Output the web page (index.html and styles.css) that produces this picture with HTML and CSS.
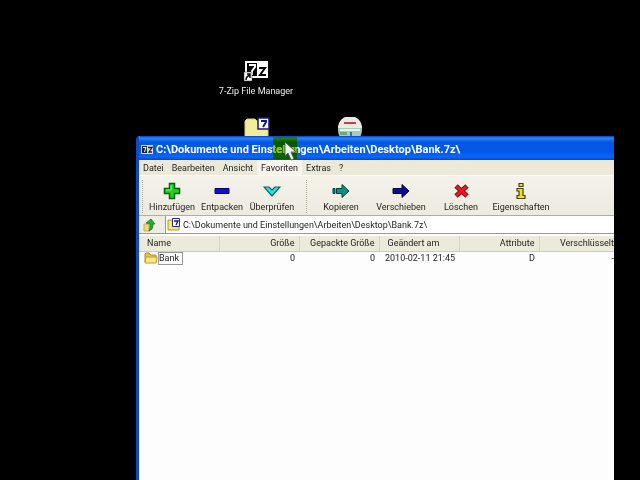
FILE: index.html
```html
<!DOCTYPE html>
<html lang="de">
<head>
<meta charset="utf-8">
<title>7-Zip</title>
<link rel="stylesheet" href="styles.css">
</head>
<body>
<main class="desktop">
  <a class="shortcut manager" href="#">
    <svg width="26" height="22" viewBox="0 0 26 22" aria-hidden="true">
      <path fill="#fff" d="M2 1h23v17H2z"/>
      <path fill="#000" d="M4 3h10v13H4z"/>
      <path fill="none" stroke="#fff" stroke-width="2" d="M6 5h6v2l-3 4v4"/>
      <path fill="none" stroke="#000" stroke-width="2" d="M16 8h6l-5 7h6"/>
      <path fill="#fff" stroke="#333" stroke-width=".5" d="M1 12h8v9H1z"/>
      <path fill="none" stroke="#000" stroke-width="1.4" d="M3 20c0-3 1-4 4-5M4 14h3v4"/>
    </svg>
    <span>7-Zip File Manager</span>
  </a>
  <a class="shortcut archive" href="#" aria-label="Archiv">
    <svg width="26" height="22" viewBox="0 0 26 22" aria-hidden="true">
      <path fill="#f4ec9c" stroke="#d8cc78" d="M1 22V4l2-2h8l2 2h11v18z"/>
      <path fill="#fff" stroke="#181878" stroke-width="1.5" d="M14 1h11v11H14z"/>
      <path fill="none" stroke="#181878" stroke-width="2" d="M17 4h5v1l-3 5"/>
    </svg>
  </a>
  <a class="shortcut disc" href="#" aria-label="CD">
    <svg width="26" height="22" viewBox="0 0 26 22" aria-hidden="true">
      <circle cx="13" cy="13" r="12" fill="#a4ccb8"/>
      <path fill="#eee8e2" d="M1 11a12 12 0 0 1 24 0z"/>
      <path fill="#b44850" d="M7 5h12v2H7z"/>
      <path fill="#e8f4e8" d="M3 12h20v2H3z"/>
      <path fill="#6aa884" d="M3 15h7v3H3z"/>
      <path fill="#2878b0" d="M13 15h2v7h-2z"/>
    </svg>
  </a>

  <section class="window">
    <header class="titlebar">
      <svg width="12" height="10" viewBox="0 0 12 10" aria-hidden="true">
        <path fill="#ddd" d="M0 0h12v9H0z"/>
        <path fill="#222" d="M1 1h5v7H1z"/>
        <path fill="none" stroke="#fff" d="M2 2.500h3L3.500 7"/>
        <path fill="none" stroke="#222" stroke-width="1.300" d="M7 2.500h4L8 7h3"/>
      </svg>
      <h1>C:\Dokumente und Einstellungen\Arbeiten\Desktop\Bank.7z\</h1>
    </header>
    <nav class="menu">
      <button>Datei</button><button>Bearbeiten</button><button>Ansicht</button><button class="hot">Favoriten</button><button>Extras</button><button>?</button>
    </nav>
    <div class="toolbar">
      <div class="group small">
        <button><svg width="18" height="18" viewBox="0 0 18 18" aria-hidden="true"><path fill="#18d820" stroke="#075c10" stroke-width="1.500" d="M6.500 1.500h5v5h5v5h-5v5h-5v-5h-5v-5h5z"/><path fill="none" stroke="#78fc70" d="M8 3v5H3"/></svg>Hinzufügen</button>
        <button><svg width="18" height="18" viewBox="0 0 18 18" aria-hidden="true"><path fill="#1010c8" stroke="#080868" d="M2 6.500h14v5H2z"/></svg>Entpacken</button>
        <button><svg width="18" height="18" viewBox="0 0 18 18" aria-hidden="true"><path fill="#30e0dc" stroke="#106468" stroke-width="1.200" d="M1 5h5l3 3 3-3h5l-8 9z"/></svg>Überprüfen</button>
      </div>
      <div class="group">
        <button><svg width="18" height="18" viewBox="0 0 18 18" aria-hidden="true"><path fill="#0c9080" stroke="#053c38" d="M1 6.500h2v5H1zM4.500 6.500H10v-4l7 6.500-7 6.500v-4H4.500z"/></svg>Kopieren</button>
        <button><svg width="18" height="18" viewBox="0 0 18 18" aria-hidden="true"><path fill="#0c0c98" stroke="#050540" d="M1 6.500h9v-4l7 6.500-7 6.500v-4H1z"/></svg>Verschieben</button>
        <button><svg width="18" height="18" viewBox="0 0 18 18" aria-hidden="true"><path fill="none" stroke="#801018" stroke-width="5" d="m4 4 11 10M15 4 4 14"/><path fill="none" stroke="#ec1820" stroke-width="3" d="m4.500 4.500 10 9M14.500 4.500l-10 9"/></svg>Löschen</button>
        <button><svg width="18" height="18" viewBox="0 0 18 18" aria-hidden="true"><path fill="#ece424" stroke="#44400c" stroke-width="1.200" d="M7 1.500h4v3H7zM5 6.500h6v7h2v3H5v-3h2V9H5z"/></svg>Eigenschaften</button>
      </div>
    </div>
    <div class="address">
      <button class="up" aria-label="Aufwärts"><svg width="14" height="14" viewBox="0 0 14 14" aria-hidden="true"><path fill="#ecd888" stroke="#c8ac50" d="M1 6h5v7H1z"/><path fill="#28a838" stroke="#147020" stroke-width=".7" d="M3 5l5-4 4 5h-2c0 4-1 6-4 7 1-2 1-5 1-7z"/></svg></button>
      <label class="path">
        <svg width="14" height="13" viewBox="0 0 14 13" aria-hidden="true"><path fill="#f4e878" stroke="#a49840" d="M1 2h4l1 1h6v9H1z"/><path fill="#fff" stroke="#282888" d="M5.500.5h7v8h-7z"/><path fill="none" stroke="#181878" stroke-width="1.400" d="M7 3h4L9 7"/></svg>
        <input aria-label="Adresse" value="C:\Dokumente und Einstellungen\Arbeiten\Desktop\Bank.7z\">
      </label>
    </div>
    <div class="list">
      <table>
        <colgroup><col><col><col><col><col><col class="c-enc"></colgroup>
        <thead><tr><th class="text">Name</th><th>Größe</th><th>Gepackte Größe</th><th class="text">Geändert am</th><th>Attribute</th><th>Verschlüsselt</th></tr></thead>
        <tbody><tr>
          <td class="text name"><div class="file"><svg width="14" height="12" viewBox="0 0 14 12" aria-hidden="true"><path fill="#ecc040" stroke="#b88c28" d="M1 10V2l1-1h3l2 2h5v7z"/><path fill="#fce888" stroke="#c09a38" d="M1 11l1-6h11l-1 6z"/></svg><span>Bank</span></div></td>
          <td>0</td><td>0</td><td class="text date">2010-02-11 21:45</td><td>D</td><td>-</td>
        </tr></tbody>
      </table>
    </div>
  </section>
  <div class="click-mark"></div>
  <svg class="cursor" width="13" height="20" viewBox="0 0 13 20" aria-hidden="true"><path fill="#e8f0fc" stroke="#404858" stroke-width=".8" d="M1 1v14l3-3 3 7 3-1-3-7h5z"/></svg>
</main>
</body>
</html>
```
FILE: styles.css
```css
* { box-sizing: border-box; }

body {
  margin: 0;
  background: #000;
  color: #222;
  font: 9px/12px Roboto, "Liberation Sans", sans-serif;
}

button, input { font: inherit; color: inherit; border: 0; padding: 0; margin: 0; background: none; }
svg { flex: none; display: block; }

.desktop {
  position: relative;
  height: 100vh;
  padding: 136px 26px 0 136px;
  overflow: hidden;
}

.shortcut {
  position: absolute;
  display: flex;
  flex-direction: column;
  align-items: center;
  gap: 3px;
  color: #eee;
  text-decoration: none;
  white-space: nowrap;
}
.manager { left: 206px; top: 60px; width: 100px; }
.archive { left: 244px; top: 117px; }
.disc { left: 337px; top: 117px; }

.window {
  position: relative;
  display: flex;
  flex-direction: column;
  height: 100%;
  overflow: hidden;
  border-left: 3px solid #1448c0;
  border-radius: 4px 0 0 0;
  background: #fdfdfd;
}

.titlebar {
  display: flex;
  align-items: center;
  gap: 3px;
  height: 24px;
  margin-left: -3px;
  padding: 3px 0 0 5px;
  background: linear-gradient(#0838b8, #2c88fc 2px, #0458e4 6px, #0458e8 16px, #0868fc 21px, #0444c8);
  color: #fff;
}
.titlebar h1 { margin: 0; font-size: 11px; line-height: 12px; white-space: nowrap; }

.menu { display: flex; height: 15px; background: #ece9d8; }
.menu button { padding: 0 4px; }
.menu .hot { background: #f6f4ec; }

.toolbar {
  display: flex;
  height: 41px;
  padding-left: 3px;
  border-top: 1px solid #fbfaf4;
  border-bottom: 1px solid #a8b0ac;
  background: linear-gradient(#f4f2ea, #edebdf);
}
.group { display: flex; border-left: 1px dotted #aaa898; margin: 4px 0 2px; }
.group + .group { margin-left: 9px; padding-left: 4px; }
.group button {
  display: flex;
  flex-direction: column;
  align-items: center;
  gap: 1px;
  width: 60px;
  padding-top: 2px;
  white-space: nowrap;
}
.group.small { padding-left: 4px; }
.group.small button { width: 50px; }

.address { display: flex; height: 18px; background: #efede2; border-bottom: 1px solid #7f9db9; }
.up { display: flex; align-items: center; justify-content: center; width: 24px; padding-right: 2px; }
.path {
  display: flex;
  flex: 1;
  align-items: center;
  gap: 2px;
  margin-left: 2px;
  padding-left: 1px;
  border-left: 1px solid #7f9db9;
  background: #fff;
}
.path input { flex: 1; min-width: 0; outline: none; }

.list { flex: 1; overflow: hidden; padding-top: 2px; }
table { width: 100%; table-layout: fixed; border-collapse: collapse; }
col { width: 80px; }
.c-enc { width: auto; }
th {
  height: 15px;
  padding: 0 4px 0 0;
  border-right: 1px solid #d8d4c4;
  border-bottom: 1px solid #d0ccba;
  background: #ebeadb;
  font-weight: normal;
  text-align: right;
  white-space: nowrap;
}
td { height: 14px; padding: 0 4px 0 0; text-align: right; white-space: nowrap; }
th:last-child, td:last-child { padding-right: 0; border-right: 0; }
th.text { padding-left: 8px; text-align: left; }
td.text { text-align: left; }
td.name { padding-left: 5px; }
td.date { padding-left: 6px; }
.file { display: flex; align-items: center; }
.file span { border: 1px solid #999; padding: 0 3px 0 0; line-height: 11px; }

.click-mark { position: absolute; left: 273px; top: 137px; width: 24px; height: 22px; background: #96c800; mix-blend-mode: darken; }
.cursor { position: absolute; left: 284px; top: 141px; }
```
